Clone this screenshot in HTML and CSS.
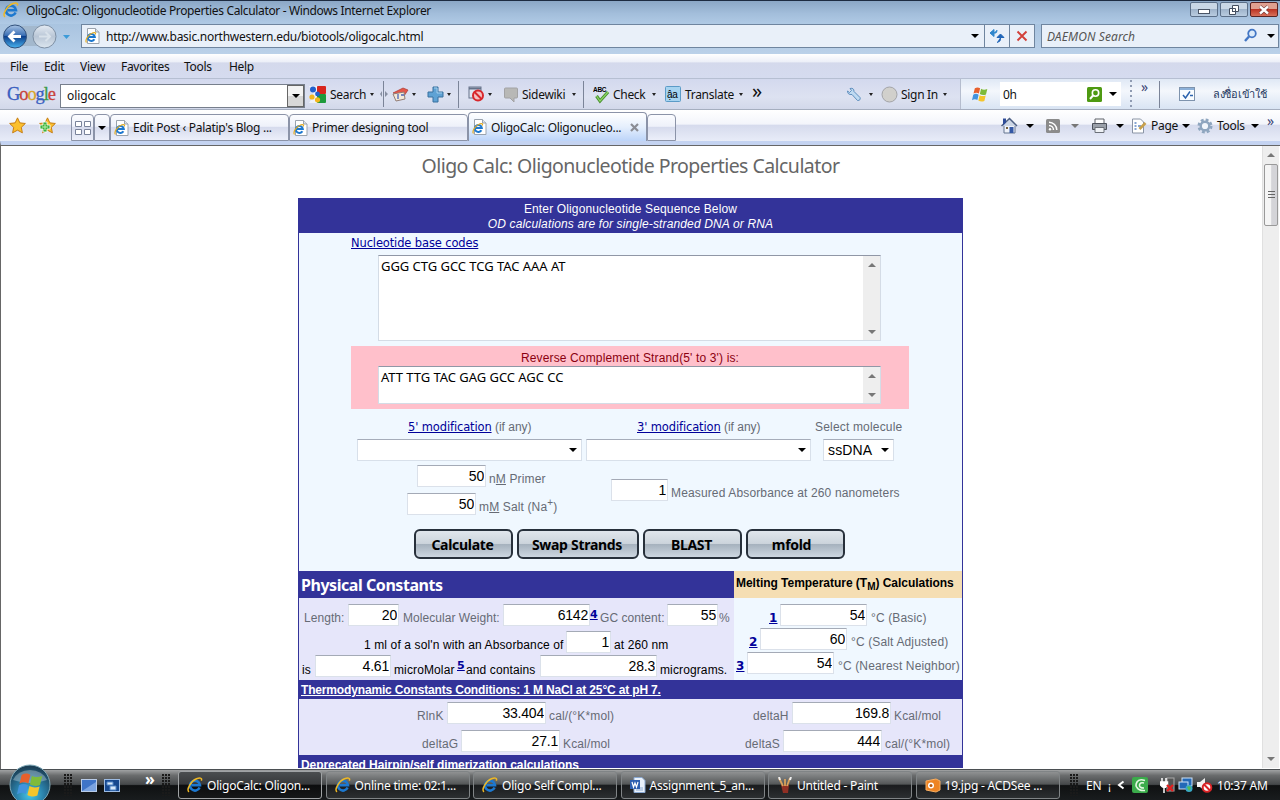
FILE: index.html
```
<!DOCTYPE html>
<html lang="en">
<head>
    <meta charset="UTF-8">
    <title>OligoCalc: Oligonucleotide Properties Calculator</title>
    <link rel="stylesheet" href="styles.css">
</head>
<body>
    <!-- shared icons -->
    <svg class="defs" width="0" height="0">
        <defs>
            <linearGradient id="orb" x1="0" y1="0" x2="0" y2="1">
                <stop offset="0" stop-color="#a9c4e4"/><stop offset=".45" stop-color="#3b6fb5"/>
                <stop offset=".5" stop-color="#0d3f8c"/><stop offset="1" stop-color="#49b4f0"/>
            </linearGradient>
            <linearGradient id="grayorb" x1="0" y1="0" x2="0" y2="1">
                <stop offset="0" stop-color="#e4ebf3"/><stop offset=".5" stop-color="#b9c6d6"/><stop offset="1" stop-color="#dce6ef"/>
            </linearGradient>
            <radialGradient id="startorb" cx=".5" cy=".75" r=".7">
                <stop offset="0" stop-color="#45c6e8"/><stop offset=".5" stop-color="#2a7fa8"/><stop offset="1" stop-color="#1c3f55"/>
            </radialGradient>
            <symbol id="ie" viewBox="0 0 16 16">
                <path d="M12.6 10.6A5 5 0 1 1 13 8.2H4.6" fill="none" stroke="#1d78cf" stroke-width="2.6"/>
                <path d="M2 14.8C-1 12.5 4 4 9.500 1.800 12.500.6 15.500.6 14.300 3.600" fill="none" stroke="#efb824" stroke-width="1.5"/>
            </symbol>
            <symbol id="iepage" viewBox="0 0 16 16">
                <path d="M2.500.5h8l3.500 3.500v11.500H2.500z" fill="#fff" stroke="#9aa3ae"/>
                <path d="M10.500.5v3.500H14" fill="#dde3ea" stroke="#9aa3ae"/>
                <path d="M9.400 11.200A3.500 3.500 0 1 1 9.800 9H3.600" fill="none" stroke="#1d78cf" stroke-width="2"/>
                <path d="M1.500 14.500C-.5 12 4 6 8 4.800c2-.6 3 0 2.300 1.600" fill="none" stroke="#e3ab22" stroke-width="1.200"/>
            </symbol>
            <symbol id="flag" viewBox="0 0 18 18">
                <path d="M3 2.500C5 1.200 7 1.400 8.600 2.500L7.300 8C5.500 7 3.700 7 1.600 8z" fill="#e8602c"/>
                <path d="M9.600 3c2 1.200 4 1.200 6.600.2L14.800 9c-2.400.9-4.400.7-6.500-.4z" fill="#7fbb3a"/>
                <path d="M1.300 9.200C3.400 8 5.200 8.100 7 9.200L5.700 14.800C3.800 13.700 2 13.800 0 15z" fill="#4293dd"/>
                <path d="M8 9.700c2 1.100 4 1.200 6.500.3l-1.400 5.800c-2.400.9-4.400.7-6.400-.4z" fill="#f5c52c"/>
            </symbol>
            <symbol id="star" viewBox="0 0 16 16">
                <path d="M8 .8l2.200 4.700 5.200.6-3.800 3.600 1 5.200L8 12.400 3.400 14.900l1-5.200L.6 6.100l5.200-.6z" fill="#fbc02e" stroke="#c47a10" stroke-width=".9"/>
            </symbol>
        </defs>
    </svg>

    <div class="titlebar">
        <svg class="ico16"><use href="#ie"/></svg>
        <span class="title-text">OligoCalc: Oligonucleotide Properties Calculator - Windows Internet Explorer</span>
        <div class="winbtns">
            <span class="winbtn"><svg width="12" height="8"><rect x=".5" y="3.500" width="11" height="4" fill="#fff" stroke="#4a5566"/></svg></span>
            <span class="winbtn"><svg width="12" height="12"><path d="M4.500 1.500h6v6h-6zM1.500 4.500h6v6h-6z" fill="#fff" stroke="#444f60"/><path d="M4 7.500h1" stroke="#444f60"/></svg></span>
            <span class="winbtn close"><svg width="12" height="10"><path d="M2 1.500l8 7M10 1.500l-8 7" stroke="#5b2a2a" stroke-width="3.600"/><path d="M2 1.500l8 7M10 1.500l-8 7" stroke="#fff" stroke-width="2.400"/></svg></span>
        </div>
    </div>

    <div class="addressbar">
        <svg class="navbtns" width="74" height="28">
            <rect x="10" y="2" width="36" height="20" fill="#a3b8cd"/>
            <circle cx="15" cy="12.500" r="11.500" fill="url(#orb)" stroke="#33527c"/>
            <path d="M21 12.500h-10M14.500 7.500l-5 5 5 5" fill="none" stroke="#fff" stroke-width="2.800"/>
            <circle cx="44.500" cy="12.500" r="11.500" fill="url(#grayorb)" stroke="#7c8ea3"/>
            <path d="M39 12.500h10M45.500 8l4.500 4.500-4.500 4.500" fill="none" stroke="#d8e1ea" stroke-width="2"/>
            <path d="M63 11h7l-3.500 4z" fill="#3d9bd8"/>
        </svg>
        <div class="urlbox">
            <svg class="ico16"><use href="#iepage"/></svg>
            <span class="url">http://www.basic.northwestern.edu/biotools/oligocalc.html</span>
            <i class="caret big"></i>
        </div>
        <div class="urlbtn"><svg width="16" height="16"><path d="M1 5l4-3.500v7zM4.500 5h2q1.500 0 1.500-3" fill="#2f86cc" stroke="#2f86cc" stroke-width="1"/><path d="M8 9.500l3.500-3.500L15 9.500zM11.500 9v2.500q0 2-3.500 3" fill="#2266b8" stroke="#2266b8" stroke-width="1"/></svg></div>
        <div class="urlbtn"><svg width="12" height="12"><path d="M1.500 1.500l9 9M10.500 1.500l-9 9" stroke="#d2403a" stroke-width="1.900"/></svg></div>
        <div class="searchbox">
            <span class="placeholder">DAEMON Search</span>
            <svg width="16" height="16"><circle cx="9" cy="5.500" r="3.800" fill="#dcebfa" stroke="#4276c4" stroke-width="1.800"/><path d="M6 8.500L2 13" stroke="#4276c4" stroke-width="2.400"/></svg>
            <i class="caret big"></i>
        </div>
    </div>

    <div class="menubar">
        <span>File</span><span>Edit</span><span>View</span><span>Favorites</span><span>Tools</span><span>Help</span>
    </div>

    <div class="googlebar">
        <div class="logo"><b class="c1">G</b><b class="c2">o</b><b class="c3">o</b><b class="c1">g</b><b class="c4">l</b><b class="c2">e</b></div>
        <div class="gsearch"><span>oligocalc</span><div class="gdrop"><i class="caret big"></i></div></div>
        <span></span>
        <svg width="17" height="17"><rect x="8" width="9" height="8" rx="1" fill="#d8251d"/><rect x="8" y="8" width="9" height="9" rx="1" fill="#1d9a3c"/><path d="M8 0v17H0l5-8-5-9z" fill="#fff" opacity=".6"/><circle cx="4" cy="3.500" r="3" fill="#2260cc"/><circle cx="3" cy="11" r="2.600" fill="#f3b61e"/><circle cx="8.500" cy="13.800" r="2.600" fill="#f3b61e"/><circle cx="8.500" cy="8" r="2.400" fill="#2260cc"/></svg>
        <span>Search</span><i class="caret"></i>
        <svg width="8" height="26"><path d="M3.500 0v26" stroke="#7b8498"/><path d="M2 10L0 13l2 3zM5 10l3 3-3 3z" fill="#8890a2"/></svg>
        <svg width="17" height="16"><path d="M1 7l10-5 5 2-4 6z" fill="#e5574a" stroke="#a93a32" stroke-width=".7"/><path d="M1 8l11-2 1 7-9 2z" fill="#f4ead9" stroke="#927c75"/><path d="M6 8v5M9 9h3" stroke="#4a65b8" stroke-width="1.300"/></svg>
        <i class="caret"></i>
        <svg width="17" height="17"><path d="M6 1h5v5h5v5h-5v5H6v-5H1V6h5z" fill="#5fa2d4" stroke="#39719f"/><path d="M7 2h3v5h5" fill="none" stroke="#a3cdeb"/></svg>
        <i class="caret"></i><i class="sep"></i>
        <svg width="17" height="17"><rect x="1" y="1" width="12" height="11" fill="#dfe6f1" stroke="#66728a"/><path d="M1 2.500h12" stroke="#66728a" stroke-width="2"/><circle cx="10" cy="9.500" r="5" fill="#f5c0c0" stroke="#d8262b" stroke-width="2"/><path d="M6.500 6l7 7" stroke="#d8262b" stroke-width="2"/></svg>
        <i class="caret"></i>
        <svg width="15" height="17"><path d="M1.500 2h11q1 0 1 1v8q0 1-1 1H10v4l-4-4H1.500q-1 0-1-1V3q0-1 1-1z" fill="#b8b8b6" stroke="#a2a2a4"/></svg>
        <span>Sidewiki</span><i class="caret"></i><i class="sep"></i>
        <svg width="18" height="19"><text x="0" y="7" class="abc">ABC</text><path d="M3.500 11l3.500 5 8-9" fill="none" stroke="#48912f" stroke-width="3.200"/><path d="M3.500 11l3.500 5 8-9" fill="none" stroke="#8ed468" stroke-width="1.200"/></svg>
        <span>Check</span><i class="caret"></i>
        <svg width="16" height="16"><rect x=".5" y=".5" width="15" height="15" rx="1" fill="#a6d3f0" stroke="#5b9bc7"/><text x="2" y="11.500" class="aa">ậa</text></svg>
        <span>Translate</span><i class="caret"></i>
        <span class="more">»</span>
        <svg width="17" height="17"><path d="M2.500 5l2 1.500 2-2L5 2.500q4-1 4 3l6 6q1 3-2.500 3L7 8.500Q2.500 9 2.500 5z" fill="#bfdaf2" stroke="#5f8fbe"/></svg>
        <i class="caret"></i>
        <svg width="17" height="17"><circle cx="8.500" cy="8.500" r="7.500" fill="#d1d0cc" stroke="#a3a4a8"/></svg>
        <span>Sign In</span><i class="caret"></i>
        <div class="livebar">
            <svg width="17" height="17"><use href="#flag"/></svg>
            <div class="livebox"><span>0h</span>
                <svg width="15" height="15"><rect width="15" height="15" rx="1.500" fill="#4e9a12"/><circle cx="8.500" cy="6" r="3.200" fill="none" stroke="#fff" stroke-width="1.600"/><path d="M6 8.500L3 12" stroke="#fff" stroke-width="2"/></svg>
                <i class="caret big"></i></div>
            <i class="dots"></i><span class="more small">»</span><i class="sep"></i>
            <svg width="17" height="15"><rect x=".5" y=".5" width="15" height="13" fill="#fafdff" stroke="#7e93ad"/><path d="M1 2h14" stroke="#8cb0d8" stroke-width="2"/><path d="M4 8l2.500 3L11 4.500M11 8.500h3" fill="none" stroke="#2d64ae" stroke-width="1.500"/></svg>
            <span class="thai">ลงชื่อเข้าใช้</span>
        </div>
    </div>

    <div class="tabbar">
        <svg width="17" height="17"><use href="#star"/></svg>
        <svg width="17" height="17"><use href="#star"/><path d="M4 5h4v3h3v4H8v3H4v-3H1V8h3z" fill="#3fb13c" stroke="#fff" stroke-width=".8"/><path d="M6 7v6M3 10h6" stroke="#baf0ae" stroke-width="1"/></svg>
        <div class="tab quick"><svg width="16" height="14"><path d="M.5.5h6v5h-6zM9.500.5h6v5h-6zM.5 8.500h6v5h-6zM9.500 8.500h6v5h-6z" fill="#fff" stroke="#79839a"/></svg></div>
        <div class="tab quick2"><i class="caret big"></i></div>
        <div class="tab"><svg class="ico16"><use href="#iepage"/></svg><span class="t1">Edit Post ‹ Palatip's Blog ...</span></div>
        <div class="tab"><svg class="ico16"><use href="#iepage"/></svg><span class="t2">Primer designing tool</span></div>
        <div class="tab active"><svg class="ico16"><use href="#iepage"/></svg><span class="t3">OligoCalc: Oligonucleo...</span><svg class="x" width="9" height="9"><path d="M1 1l7 7M8 1L1 8" stroke="#8b8d95" stroke-width="2.200"/></svg></div>
        <div class="tab newtab"></div>
        <div class="commands">
            <svg width="17" height="17"><path d="M3 7v9h11V7" fill="#eef2fa" stroke="#65748f"/><path d="M.5 9L8.500 1.500 16 9" fill="#ccd6e6" stroke="#4d5f83" stroke-width="1.500"/><path d="M2 1.500h3v4l-3 3z" fill="#2e4c98"/><rect x="8.500" y="10" width="4" height="6" fill="#3458a5"/><path d="M5 10h2v2H5z" fill="#75613d"/></svg>
            <i class="caret big"></i>
            <svg width="14" height="14"><rect width="14" height="14" rx="1.500" fill="#8b8b8b"/><path d="M3 6.500a4.500 4.500 0 0 1 4.500 4.500M3 3.200A7.800 7.800 0 0 1 10.800 11" fill="none" stroke="#fff" stroke-width="1.500"/><circle cx="4" cy="10.300" r="1.200" fill="#fff"/></svg>
            <i class="caret big gray"></i>
            <svg width="17" height="16"><path d="M4 1h9v5H4z" fill="#fff" stroke="#5c6068"/><path d="M1.500 5.500h14v6h-14z" fill="#9aa0a9" stroke="#4d525b"/><path d="M4 9.500h9v5H4z" fill="#eff2f6" stroke="#6b7078"/></svg>
            <i class="caret big"></i>
            <svg width="17" height="16"><path d="M1.500 1h8l3 3v11h-11z" fill="#fff" stroke="#8a94a5"/><path d="M3.500 5h2M3.500 8h2M3.500 11h2M7 8h3" stroke="#6188c4" stroke-width="1.400"/><path d="M14.500 5l-6 6" stroke="#c7a04c" stroke-width="2.600"/></svg>
            <span>Page</span><i class="caret big"></i>
            <svg width="17" height="16"><circle cx="8" cy="8" r="6" fill="none" stroke="#8fa6bf" stroke-width="3" stroke-dasharray="2.700 2"/><circle cx="8" cy="8" r="4.300" fill="#f2f6fb" stroke="#8fa6bf" stroke-width="2.400"/></svg>
            <span>Tools</span><i class="caret big"></i><span class="more small">»</span>
        </div>
    </div>

    <div class="viewport">
        <div class="page">
            <h1>Oligo Calc: Oligonucleotide Properties Calculator</h1>
            <div class="calc">
                <div class="band intro"><span>Enter Oligonucleotide Sequence Below</span><em>OD calculations are for single-stranded DNA or RNA</em></div>
                <div class="entry">
                    <a class="codes">Nucleotide base codes</a>
                    <div class="area tall"><textarea>GGG CTG GCC TCG TAC AAA AT</textarea><div class="areabar"><i></i><i class="down"></i></div></div>
                    <div class="reverse">
                        <p>Reverse Complement Strand(5' to 3') is:</p>
                        <div class="area"><textarea>ATT TTG TAC GAG GCC AGC CC</textarea><div class="areabar"><i></i><i class="down"></i></div></div>
                    </div>
                    <div class="modlabels"><span><a>5' modification</a> (if any)</span><span><a>3' modification</a> (if any)</span><span class="mol">Select molecule</span></div>
                    <div class="modselects"><div class="select"><i class="caret big"></i></div><div class="select"><i class="caret big"></i></div><div class="select">ssDNA<i class="caret big"></i></div></div>
                    <div class="conc">
                        <div class="conc-left">
                            <div class="line primer"><input value="50"><label>n<u>M</u> Primer</label></div>
                            <div class="line salt"><input value="50"><label>m<u>M</u> Salt (Na<sup>+</sup>)</label></div>
                        </div>
                        <div class="line absorb"><input value="1"><label>Measured Absorbance at 260 nanometers</label></div>
                    </div>
                    <div class="buttons"><button>Calculate</button><button>Swap Strands</button><button>BLAST</button><button class="mfold">mfold</button></div>
                </div>
                <div class="results">
                    <div class="physical">
                        <h2>Physical Constants</h2>
                        <div class="line p1"><label>Length:</label><input value="20"><label>Molecular Weight:</label><input class="tight" value="6142"><a>4</a><label>GC content:</label><input value="55"><label>%</label></div>
                        <div class="line dark p2"><label>1 ml of a sol'n with an Absorbance of</label><input value="1"><label>at 260 nm</label></div>
                        <div class="line dark p3"><label>is</label><input value="4.61"><label>microMolar</label><a>5</a><label>and contains</label><input value="28.3"><label>micrograms.</label></div>
                    </div>
                    <div class="melting">
                        <h3>Melting Temperature (T<sub>M</sub>) Calculations</h3>
                        <div class="line m1"><a>1</a><input value="54"><label>°C (Basic)</label></div>
                        <div class="line m2"><a>2</a><input value="60"><label>°C (Salt Adjusted)</label></div>
                        <div class="line m3"><a>3</a><input value="54"><label>°C (Nearest Neighbor)</label></div>
                    </div>
                </div>
                <div class="band thermo-head"><u>Thermodynamic Constants Conditions: 1 M NaCl at 25°C at pH 7.</u></div>
                <div class="thermo">
                    <div class="line h1"><label>RlnK</label><input value="33.404"><label>cal/(°K*mol)</label><label>deltaH</label><input value="169.8"><label>Kcal/mol</label></div>
                    <div class="line h2"><label>deltaG</label><input value="27.1"><label>Kcal/mol</label><label>deltaS</label><input value="444"><label>cal/(°K*mol)</label></div>
                </div>
                <div class="band hairpin"><u>Deprecated Hairpin/self dimerization calculations</u></div>
            </div>
        </div>
        <div class="scrollbar"><i class="up"></i><div class="thumb"></div><i class="down"></i></div>
    </div>

    <div class="taskbar">
        <svg class="start" width="44" height="36"><circle cx="21" cy="21" r="20" fill="url(#startorb)" stroke="#7fa9b8"/><path d="M4 16a18 15 0 0 1 34 0q-17 6-34 0z" fill="#fff" opacity=".3"/><svg x="8" y="7" width="28" height="28"><use href="#flag"/></svg></svg>
        <i class="grip"></i>
        <svg width="16" height="14"><rect x=".5" y=".5" width="15" height="12" fill="#3f74c8" stroke="#b8cbe8"/><path d="M1 12L15 3v9z" fill="#7ba3e0"/></svg>
        <svg width="16" height="14"><rect x=".5" y=".5" width="15" height="12" fill="#17488f" stroke="#9dbbe2"/><path d="M3 3h6v3H3zM6 7h6v4H6z" fill="#d8e8fa" stroke="#5386c6"/></svg>
        <span class="chev">»</span>
        <i class="grip"></i>
        <div class="tasks">
            <div class="task current"><svg class="ico16"><use href="#ie"/></svg><span>OligoCalc: Oligon...</span></div>
            <div class="task"><svg class="ico16"><use href="#ie"/></svg><span>Online time: 02:1...</span></div>
            <div class="task"><svg class="ico16"><use href="#ie"/></svg><span>Oligo Self Compl...</span></div>
            <div class="task"><svg class="ico16"><path d="M4 .5h8l3 3v12H4z" fill="#e9f1fb" stroke="#8aa9d2"/><path d="M6 11h7M6 13h7" stroke="#8aa9d2"/><rect x="0" y="3" width="10" height="9" fill="#2d5fb0"/><path d="M2 5l1.500 5L5 6l1.500 4L8 5" fill="none" stroke="#fff" stroke-width="1.200"/></svg><span>Assignment_5_an...</span></div>
            <div class="task"><svg class="ico16"><path d="M4 8h8l-1 8H6z" fill="#8f2f24"/><path d="M6 9L2 1M8 9V2M10 9l3-8" stroke="#d9a05b" stroke-width="1.800"/><path d="M3 3L2 0M13 3l1-3" stroke="#eee" stroke-width="2"/></svg><span>Untitled - Paint</span></div>
            <div class="task"><svg class="ico16"><path d="M1 4l10-2 4 2v9l-4 2-10-2z" fill="#ee8423" stroke="#f7ae62"/><circle cx="6" cy="8.500" r="3" fill="#fff"/><circle cx="6" cy="8.500" r="1.500" fill="#b65a12"/></svg><span>19.jpg - ACDSee ...</span></div>
        </div>
        <i class="grip"></i>
        <div class="tray">
            <span>EN</span><span class="tiny">¡</span>
            <svg width="8" height="10"><path d="M6.500 1.500L2 5l4.500 3.500" fill="none" stroke="#fff" stroke-width="2"/></svg>
            <svg width="16" height="16"><rect width="16" height="16" rx="2" fill="#3bab4b"/><path d="M13 3.500Q7 1.500 5 5t0 5.500q2 3.500 8 3M12 6q-4-1-4.500 2T12 11" fill="none" stroke="#e4f8e2" stroke-width="1.600"/></svg>
            <svg width="16" height="16"><rect x="7" y="1" width="7" height="13" fill="#555" stroke="#aaa"/><path d="M2 1v4M6 1v4M.5 5h7v3q-3.500 5-7 0zM4 10v6" fill="#fff" stroke="#fff" stroke-width="1.500"/><path d="M7 8l6 6M13 8l-6 6" stroke="#e21f1f" stroke-width="2.400"/></svg>
            <svg width="16" height="16"><rect x="4" y="1" width="10" height="8" fill="#2469b7" stroke="#cfe3f8"/><rect x="1" y="5" width="9" height="7" fill="#2469b7" stroke="#cfe3f8"/><circle cx="11" cy="11.500" r="3.500" fill="#38a9c7"/><path d="M9 10q3-2 4 1l-2 3z" fill="#53be54"/></svg>
            <svg width="17" height="16"><path d="M1 5h3l5-4v13l-5-4H1z" fill="#f2f2f2"/><circle cx="11" cy="10.500" r="4.300" fill="#fff" stroke="#db2326" stroke-width="2"/><path d="M8 7.500l6 6" stroke="#db2326" stroke-width="2"/></svg>
            <span class="clock">10:37 AM</span>
        </div>
    </div>
</body>
</html>
```

FILE: styles.css
```
* {
    box-sizing: border-box;
}

body {
    margin: 0;
    width: 1280px;
    height: 800px;
    overflow: hidden;
    font-family: "Noto Sans", "Open Sans", sans-serif;
    font-size: 12px;
    color: #111;
    display: flex;
    flex-direction: column;
    background: #fff;
}

svg {
    display: block;
    flex: none;
}

.defs {
    position: absolute;
}

span, label {
    white-space: nowrap;
}

.ico16 {
    width: 16px;
    height: 16px;
}

.caret {
    display: block;
    width: 0;
    height: 0;
    border: 2.5px solid transparent;
    border-top: 3px solid #222;
    border-bottom: 0;
}

.caret.big {
    border-width: 4px 4px 0 4px;
    border-top-color: #000;
}

.caret.gray {
    border-top-color: #777;
}

/* browser chrome */
.titlebar {
    height: 24px;
    border-top: 1px solid #1d2b41;
    background: linear-gradient(#8ba7c6, #a3bedb 55%, #b0cae5);
    display: flex;
    align-items: flex-start;
    padding: 1px 0 0 3px;
}

.title-text {
    margin-left: 7px;
    line-height: 17px;
    letter-spacing: -0.35px;
    width: 420px;
}

.winbtns {
    display: flex;
    gap: 2px;
    margin-left: 744px;
}

.winbtn {
    width: 28px;
    height: 15px;
    border: 1px solid #5b6f88;
    border-radius: 2px;
    background: linear-gradient(#c9d7e6 45%, #9fb4cb 50%, #b9cce0);
    display: flex;
    align-items: center;
    justify-content: center;
}

.winbtn.close {
    border-color: #5a2322;
    background: linear-gradient(#e0a090 45%, #bc3525 50%, #d8705a);
}

.addressbar {
    height: 30px;
    background: linear-gradient(#a9c4e0, #bbd1e9);
    display: flex;
}

.navbtns {
    width: 81px;
}

.urlbox, .urlbtn, .searchbox {
    height: 24px;
    border: 1px solid #6f859f;
    background: #e9f0f9;
    display: flex;
    align-items: center;
}

.urlbox {
    width: 904px;
    padding-left: 3px;
}

.url {
    margin-left: 5px;
    width: 865px;
    letter-spacing: -0.28px;
}

.urlbtn {
    width: 25px;
    border-left: 0;
    justify-content: center;
}

.searchbox {
    width: 238px;
    margin-left: 6px;
    padding-left: 5px;
}

.placeholder {
    width: 196px;
    font-style: italic;
    color: #555;
    letter-spacing: 0.1px;
}

.searchbox .caret {
    margin-left: 8px;
}

.menubar {
    height: 25px;
    border-bottom: 1px solid #b6bfd2;
    background: linear-gradient(#fff, #eceff8 33%, #d4d9ec 37%, #d5dbef);
    display: grid;
    grid-template-columns: 34px 36px 41px 63px 45px 60px;
    align-items: center;
    padding-left: 10px;
    letter-spacing: -0.3px;
}

.googlebar {
    height: 31px;
    border-bottom: 1px solid #a5aebf;
    background: linear-gradient(#d3d9ee, #dde2f1 60%, #d2d8ea);
    display: grid;
    grid-template-columns: 53px 245px 4px 21px 40px 10px 12px 20px 15px 20px 11px 10px 20px 16px 18px 50px 11px 10px 20px 39px 13px 20px 54px 13px 93px 24px 12px 20px 42px 17px 320px;
    align-items: center;
    padding-left: 7px;
    letter-spacing: -0.3px;
}

.logo {
    font-family: "Liberation Serif", serif;
    font-size: 18.5px;
    letter-spacing: -1.1px;
}

.logo b {
    font-weight: normal;
    -webkit-text-stroke: 0.3px;
}

.c1 { color: #3a5fc0; }
.c2 { color: #c8433b; }
.c3 { color: #d9a42a; }
.c4 { color: #3c9a4a; }

.gsearch {
    height: 24px;
    margin-top: 3px;
    border: 1px solid #777f8c;
    background: #fff;
    display: flex;
    align-items: center;
    justify-content: space-between;
    padding-left: 6px;
    letter-spacing: -0.1px;
}

.gdrop {
    width: 17px;
    height: 22px;
    border: 1px solid #666;
    background: linear-gradient(#f3f3f3 50%, #d7d7d7 50%);
    display: flex;
    align-items: center;
    justify-content: center;
}

.sep {
    width: 1px;
    height: 27px;
    background: #7b8498;
}

.abc {
    font: bold 6.5px "Liberation Sans", sans-serif;
}

.aa {
    font: 10px "Liberation Sans", sans-serif;
}

.more {
    font-size: 20px;
    line-height: 20px;
    margin-top: -7px;
}

.more.small {
    font-size: 14px;
    color: #3b4575;
    align-self: start;
    margin-top: -2px;
}

.livebar {
    height: 30px;
    display: grid;
    grid-template-columns: 28px 130px 11px 18px 20px 34px 60px;
    align-items: center;
    padding-left: 11px;
    border-left: 1px solid #b5bdce;
    background: linear-gradient(#dfe8f5, #f4f7fc 40%, #d9e4f3);
}

.livebox {
    width: 121px;
    height: 24px;
    background: #fff;
    display: grid;
    grid-template-columns: 84px 22px 10px;
    align-items: center;
    padding-left: 3px;
}

.dots {
    height: 28px;
    width: 2px;
    background: repeating-linear-gradient(#8f9bb2 0 2px, transparent 2px 5px);
}

.thai {
    font-size: 11px;
    color: #25395f;
}

.tabbar {
    height: 31px;
    background: linear-gradient(#fff, #f3f5fb 45%, #d6dbed 50%, #e8ecf8);
    display: grid;
    grid-template-columns: 30px 32px 23px 16px 179px 179px 179px 354px 279px;
    align-items: center;
    padding-left: 9px;
    letter-spacing: -0.28px;
}

.tab {
    align-self: end;
    height: 27px;
    border: 1px solid #8b93a8;
    border-radius: 4px 4px 0 0;
    background: linear-gradient(#fbfcff, #eef1fa 45%, #d6dbed 50%, #eceffa);
    display: flex;
    align-items: center;
    padding-left: 3px;
}

.tab span {
    margin-left: 3px;
}

.tab .t1, .tab .t2 {
    width: 145px;
}

.tab.active {
    height: 29px;
    background: linear-gradient(#fff, #e5effd 50%, #bcd4f9);
    border-bottom: 0;
}

.t3 {
    width: 139px;
}

.newtab {
    width: 29px;
}

.commands {
    display: grid;
    grid-template-columns: 25px 20px 25px 20px 25px 15px 20px 31px 15px 20px 34px 16px 12px;
    align-items: center;
    height: 25px;
}

/* page */
.viewport {
    height: 628px;
    border-top: 5px solid #c4d3f1;
    border-left: 1px solid #666;
    display: flex;
    position: relative;
}

.viewport::before {
    content: "";
    position: absolute;
    top: -1px;
    left: -1px;
    right: 0;
    height: 1px;
    background: #666;
}

.page {
    width: 1261px;
    padding-left: 297px;
    height: 622px;
    overflow: hidden;
    font-family: "Liberation Sans", Arial, sans-serif;
    letter-spacing: 0.14px;
    color: #666b75;
}

h1 {
    margin: 0;
    width: 665px;
    height: 52px;
    padding-top: 6px;
    text-align: center;
    font: 19.5px/28px "Comic Sans MS", "Noto Sans", sans-serif;
    letter-spacing: -0.55px;
    white-space: nowrap;
    color: #666;
}

.calc {
    width: 665px;
    border: solid #339;
    border-width: 0 1px;
    background: #f0f8ff;
}

.band {
    background: #339;
    color: #fff;
    font-weight: bold;
    padding-left: 2px;
}

.intro {
    height: 35px;
    padding: 4px 0 0;
    font-weight: normal;
    line-height: 15px;
    display: flex;
    flex-direction: column;
    align-items: center;
}

.page a {
    color: #009;
    text-decoration: underline;
}

.codes, .modlabels a {
    font-family: "DejaVu Sans", Verdana, sans-serif;
    font-size: 11.5px;
    letter-spacing: -0.13px;
}

.entry {
    height: 338px;
}

.codes {
    display: block;
    height: 22px;
    line-height: 20px;
    padding-left: 52px;
}

.area {
    width: 503px;
    height: 38px;
    margin-left: 27px;
    border: 1px solid #d4dce6;
    border-top-color: #9097a6;
    background: #fff;
    display: flex;
}

.area.tall {
    height: 86px;
    margin-left: 79px;
}

textarea {
    flex: 1;
    border: 0;
    padding: 2px;
    margin: 0;
    resize: none;
    overflow: hidden;
    background: transparent;
    font: 13px/16px "Noto Sans", Tahoma, sans-serif;
    letter-spacing: -0.04px;
    color: #000;
}

.areabar {
    width: 17px;
    background: #eee;
    display: flex;
    flex-direction: column;
    justify-content: space-between;
    align-items: center;
    padding: 7px 0 6px;
}

.areabar i, .scrollbar i {
    border: 4px solid transparent;
    border-top: 0;
    border-bottom: 4px solid #777;
}

.areabar i.down, .scrollbar i.down {
    border-bottom: 0;
    border-top: 4px solid #777;
}

.reverse {
    width: 558px;
    height: 63px;
    margin: 5px 0 0 52px;
    background: #ffc0cb;
}

.reverse p {
    margin: 0;
    height: 20px;
    padding-top: 5px;
    text-align: center;
    color: #8b0010;
}

.modlabels {
    display: grid;
    grid-template-columns: 229px 178px 148px;
    height: 30px;
    padding: 11px 0 0 109px;
    white-space: nowrap;
    letter-spacing: 0;
}

.mol {
    letter-spacing: 0.18px;
}

.modselects {
    display: grid;
    grid-template-columns: 225px 225px 71px;
    column-gap: 4px;
    padding-left: 58px;
}

.select:last-child {
    margin-left: 8px;
    width: 71px;
}

.select {
    height: 22px;
    border: 1px solid #d8e0ea;
    border-top-color: #a6adba;
    background: #fff;
    display: flex;
    align-items: center;
    font-size: 14px;
    color: #000;
    padding: 0 4px;
}

.select .caret {
    margin-left: auto;
}

.conc {
    display: flex;
    padding-top: 4px;
    height: 68px;
}

.conc-left {
    width: 312px;
}

.line {
    display: grid;
    align-items: start;
}

.line label {
    padding-top: 7px;
    line-height: 14px;
}

.line input {
    height: 22px;
    width: calc(100% - 3px);
    border: 1px solid #dbe1ea;
    border-top-color: #a4aab6;
    background: #fff;
    padding: 0 1px;
    text-align: right;
    font: 14px "Liberation Sans", Arial, sans-serif;
    letter-spacing: -0.2px;
    color: #000;
}

.line input.tight {
    width: 100%;
}

.line a {
    font: bold 12px/14px "DejaVu Sans", Verdana, sans-serif;
    padding-top: 7px;
}

.line sup {
    font-size: 10px;
    line-height: 0;
}

.primer {
    grid-template-columns: 72px 100px;
    padding-left: 118px;
    height: 28px;
}

.salt {
    grid-template-columns: 72px 100px;
    padding-left: 108px;
}

.absorb {
    grid-template-columns: 60px 240px;
    padding-top: 14px;
}

.buttons {
    display: grid;
    grid-template-columns: 99px 122px 99px 99px;
    column-gap: 4px;
    padding-left: 115px;
}

button {
    height: 30px;
    border: 2px solid #27303b;
    border-radius: 6px;
    background: linear-gradient(#e0e6ec, #ccd4dc 48%, #a6b2be 52%, #cdd7e1);
    font: bold 14px "Comic Sans MS", "Noto Sans", sans-serif;
    letter-spacing: -0.3px;
    color: #000;
    padding: 0 2px 0 0;
    white-space: nowrap;
}

.mfold {
    padding-right: 8px;
}

.results {
    display: flex;
    height: 109px;
}

.physical {
    width: 435px;
    background: #e6e6fa;
}

.physical h2 {
    margin: 0 0 6px;
    height: 27px;
    padding-left: 2px;
    background: #339;
    color: #fff;
    font: bold 16px/28px "Comic Sans MS", "Noto Sans", sans-serif;
    letter-spacing: -0.45px;
}

.p1 {
    grid-template-columns: 44px 55px 100px 87px 10px 67px 52px 15px;
    padding-left: 5px;
    height: 27px;
    letter-spacing: 0.05px;
}

.p1 input {
    width: 51px;
}

.dark {
    color: #000;
    letter-spacing: 0.12px;
}

.p2 {
    grid-template-columns: 202px 48px 80px;
    padding-left: 65px;
    height: 24px;
}

.p3 {
    grid-template-columns: 13px 79px 63px 9px 74px 120px 74px;
    padding-left: 3px;
}

.physical .line a {
    font-size: 11px;
    padding-top: 4px;
}

.p3 label {
    padding-top: 8px;
}

.melting {
    width: 228px;
}

.melting h3 {
    margin: 0 0 6px;
    height: 27px;
    padding-left: 2px;
    background: #f5deb3;
    color: #000;
    font: bold 12px/24px "Liberation Sans", Arial, sans-serif;
    letter-spacing: -0.03px;
    white-space: nowrap;
}

.melting sub {
    line-height: 0;
}

.melting .line {
    height: 24px;
    grid-template-columns: 11px 91px 120px;
}

.melting .line input {
    width: 87px;
}

.m1 { padding-left: 35px; }
.m2 { padding-left: 15px; }
.m3 { padding-left: 2px; }

.thermo-head {
    height: 19px;
    line-height: 20px;
    letter-spacing: -0.16px;
}

.thermo {
    height: 56px;
    padding-top: 3px;
    background: #e6e6fa;
}

.thermo .line {
    height: 28px;
}

.thermo input {
    width: 99px;
}

.h1 {
    grid-template-columns: 30px 102px 204px 39px 102px 90px;
    padding-left: 118px;
}

.h2 {
    grid-template-columns: 39px 102px 182px 38px 102px 90px;
    padding-left: 123px;
}

.hairpin {
    height: 20px;
    line-height: 20px;
    letter-spacing: -0.06px;
}

.scrollbar {
    width: 17px;
    height: 622px;
    background: #eee;
    border-left: 1px solid #e0e0e0;
    display: flex;
    flex-direction: column;
    align-items: center;
    padding: 7px 0;
}

.scrollbar .thumb {
    width: 14px;
    height: 62px;
    margin: 7px 0 auto;
    border: 1px solid #999;
    border-radius: 2px;
    background: repeating-linear-gradient(#666 0 1px, transparent 1px 3px) center / 7px 9px no-repeat, linear-gradient(90deg, #f5f5f5 50%, #d4d4d8 55%);
}

/* taskbar */
.taskbar {
    height: 31px;
    border-top: 1px solid #4b4f52;
    background: linear-gradient(#a0a2a3, #6a6c6d 18%, #45484a 48%, #0f1112 52%, #191c1e);
    display: grid;
    grid-template-columns: 17px 23px 41px 17px 16px 892px 16px 200px;
    padding-left: 64px;
    align-items: center;
    position: relative;
    color: #fff;
    letter-spacing: -0.2px;
}

.taskbar > svg:not(.start) {
    margin-top: 2px;
}

.start {
    position: absolute;
    left: 9px;
    top: -6px;
}

.grip {
    width: 9px;
    height: 22px;
    background: radial-gradient(circle at 1px 1px, #1a1a1a 1px, transparent 1.2px) 0 0 / 3px 3px;
}

.chev {
    font-size: 16px;
    font-weight: bold;
    line-height: 16px;
    margin-top: -13px;
}

.tasks {
    display: grid;
    grid-template-columns: repeat(6, 144px);
    column-gap: 3.5px;
}

.task {
    height: 28px;
    border: 1px solid #808486;
    border-radius: 3px;
    background: linear-gradient(#8f9192, #555859 46%, #1a1c1e 52%, #2c2f31);
    display: flex;
    align-items: center;
    padding-left: 8px;
}

.task span {
    margin-left: 4px;
}

.task.current {
    border-color: #a0a3a5;
    background: linear-gradient(#4b4e50, #37393b 46%, #0c0d0e 52%, #161819);
}

.tray {
    display: grid;
    grid-template-columns: 22px 9px 15px 28px 18px 18px 21px 60px;
    align-items: center;
}

.tiny {
    font-size: 11px;
}
```
